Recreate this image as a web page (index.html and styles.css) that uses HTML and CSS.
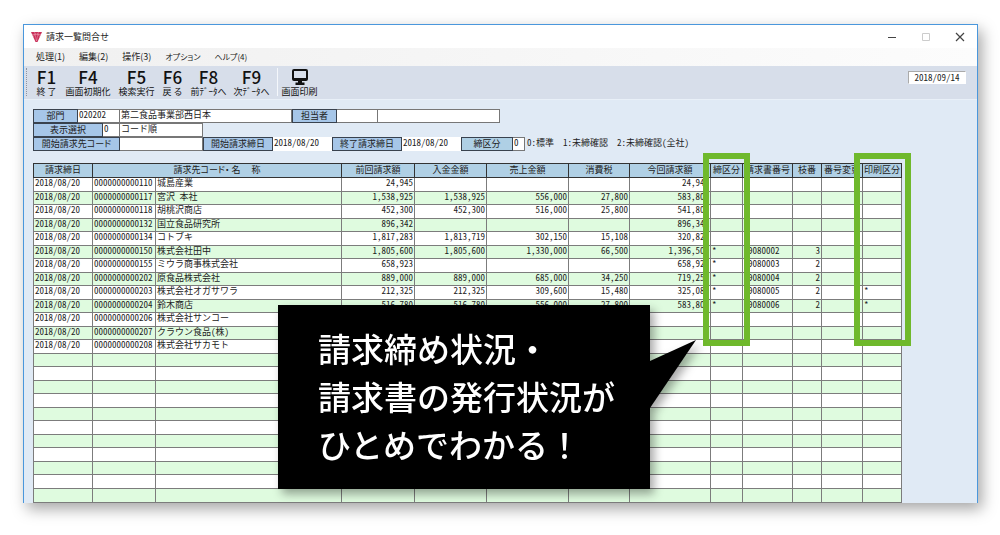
FILE: index.html
```html
<!DOCTYPE html>
<html lang="ja">
<head>
<meta charset="utf-8">
<meta name="viewport" content="width=device-width, initial-scale=1">
<title>請求一覧問合せ</title>
<link rel="stylesheet" href="styles.css">
</head>
<body>
<main class="window">
  <header class="titlebar">
    <svg class="logo" viewBox="0 0 11 10" aria-hidden="true"><path d="M0 0h11L6.500 10h-2z" fill="#c9305a"/><path d="M1 2.500h9M3.500 0l2 9M7.500 0l-2 9M2 5l3-4M9 5L6 1" stroke="#f3b6c6" stroke-width=".4" fill="none"/></svg>
    <h1 class="title">請求一覧問合せ</h1>
    <div class="controls">
      <button type="button" aria-label="最小化"><svg viewBox="0 0 10 10"><path d="M1 5.500h8" stroke="#444"/></svg></button>
      <button type="button" aria-label="最大化" disabled><svg viewBox="0 0 10 10"><path d="M1.500 1.500h7v7h-7z" stroke="#ccc" fill="none"/></svg></button>
      <button type="button" aria-label="閉じる"><svg viewBox="0 0 10 10"><path d="M1 1l8 8M9 1L1 9" stroke="#444" stroke-width="1.200"/></svg></button>
    </div>
  </header>
  <nav class="menu">
    <button type="button">処理(1)</button>
    <button type="button">編集(2)</button>
    <button type="button">操作(3)</button>
    <button type="button" class="kana">オプション</button>
    <button type="button" class="kana">ヘルプ(4)</button>
  </nav>
  <div class="toolbar">
    <span class="grip"></span>
    <button type="button" class="tool w-s"><b>F1</b><span>終 了</span></button>
    <button type="button" class="tool w-l"><b>F4</b><span>画面初期化</span></button>
    <button type="button" class="tool w-m"><b>F5</b><span>検索実行</span></button>
    <button type="button" class="tool w-s"><b>F6</b><span>戻 る</span></button>
    <button type="button" class="tool w-m"><b>F8</b><span>前ﾃﾞｰﾀへ</span></button>
    <button type="button" class="tool w-m"><b>F9</b><span>次ﾃﾞｰﾀへ</span></button>
    <span class="separator"></span>
    <button type="button" class="tool w-m"><svg class="monitor" viewBox="0 0 16 16" aria-hidden="true"><rect x="1" y="1" width="14" height="10" rx="1" fill="none" stroke="#111" stroke-width="2"/><path d="M1 9h14v2H1zM6 11h4v3H6zM3.500 13.500h9V16h-9z" fill="#111"/></svg><span>画面印刷</span></button>
    <time class="today">2018/09/14</time>
  </div>

  <section class="content">
    <form class="search">
      <div class="line">
        <label class="w45" for="dept">部門</label>
        <input class="w42" id="dept" value="020202">
        <input class="w172" aria-label="部門名" value="第二食品事業部西日本">
        <label class="w45" for="person">担当者</label>
        <input class="w41" id="person">
        <input class="w122" aria-label="担当者名">
      </div>
      <div class="line">
        <label class="w70" for="view">表示選択</label>
        <input class="w17" id="view" value="0">
        <input class="w83" aria-label="表示順" value="コード順">
      </div>
      <div class="line">
        <label class="w87" for="code">開始請求先コード</label>
        <input class="w83" id="code">
        <label class="w70" for="from">開始請求締日</label>
        <input class="w59 plain" id="from" value="2018/08/20">
        <label class="w70" for="to">終了請求締日</label>
        <input class="w59 plain" id="to" value="2018/08/20">
        <label class="w52 pale" for="kind">締区分</label>
        <input class="w12" id="kind" value="0">
        <span class="hint">0:標準&nbsp; 1:未締確認&nbsp; 2:未締確認(全社)</span>
      </div>
    </form>

    <table class="list">
      <colgroup><col class="c59"><col class="c63"><col><col class="c73"><col class="c72"><col class="c82"><col class="c61"><col class="c81"><col class="c32"><col class="c50"><col class="c29"><col class="c41"><col class="c39"></colgroup>
      <thead>
        <tr><th>請求締日<th colspan="2">請求先コード・ 名　 称<th>前回請求額<th>入金金額<th>売上金額<th>消費税<th>今回請求額<th>締区分<th>請求書番号<th>枝番<th>番号変更<th>印刷区分</tr>
      </thead>
      <tbody>
        <tr><td>2018/08/20<td>0000000000110<td>城島産業<td>24,945<td><td><td><td>24,945<td><td><td><td><td></tr>
        <tr><td>2018/08/20<td>0000000000117<td>宮沢 本社<td>1,538,925<td>1,538,925<td>556,000<td>27,800<td>583,800<td><td><td><td><td></tr>
        <tr><td>2018/08/20<td>0000000000118<td>胡桃沢商店<td>452,300<td>452,300<td>516,000<td>25,800<td>541,800<td><td><td><td><td></tr>
        <tr><td>2018/08/20<td>0000000000132<td>国立食品研究所<td>896,342<td><td><td><td>896,342<td><td><td><td><td></tr>
        <tr><td>2018/08/20<td>0000000000134<td>コトブキ<td>1,817,283<td>1,813,719<td>302,150<td>15,108<td>320,822<td><td><td><td><td></tr>
        <tr><td>2018/08/20<td>0000000000150<td>株式会社田中<td>1,805,600<td>1,805,600<td>1,330,000<td>66,500<td>1,396,500<td>*<td>9080002<td>3<td><td></tr>
        <tr><td>2018/08/20<td>0000000000155<td>ミウラ商事株式会社<td>658,923<td><td><td><td>658,923<td>*<td>9080003<td>2<td><td></tr>
        <tr><td>2018/08/20<td>0000000000202<td>原食品株式会社<td>889,000<td>889,000<td>685,000<td>34,250<td>719,250<td>*<td>9080004<td>2<td><td></tr>
        <tr><td>2018/08/20<td>0000000000203<td>株式会社オガサワラ<td>212,325<td>212,325<td>309,600<td>15,480<td>325,080<td>*<td>9080005<td>2<td><td>*</tr>
        <tr><td>2018/08/20<td>0000000000204<td>鈴木商店<td>516,780<td>516,780<td>556,000<td>27,800<td>583,800<td>*<td>9080006<td>2<td><td>*</tr>
        <tr><td>2018/08/20<td>0000000000206<td>株式会社サンコー<td><td><td><td><td><td><td><td><td><td></tr>
        <tr><td>2018/08/20<td>0000000000207<td>クラウン食品(株)<td><td><td><td><td><td><td><td><td><td></tr>
        <tr><td>2018/08/20<td>0000000000208<td>株式会社サカモト<td><td><td><td><td><td><td><td><td><td></tr>
        <tr><td><td><td><td><td><td><td><td><td><td><td><td><td></tr>
        <tr><td><td><td><td><td><td><td><td><td><td><td><td><td></tr>
        <tr><td><td><td><td><td><td><td><td><td><td><td><td><td></tr>
        <tr><td><td><td><td><td><td><td><td><td><td><td><td><td></tr>
        <tr><td><td><td><td><td><td><td><td><td><td><td><td><td></tr>
        <tr><td><td><td><td><td><td><td><td><td><td><td><td><td></tr>
        <tr><td><td><td><td><td><td><td><td><td><td><td><td><td></tr>
        <tr><td><td><td><td><td><td><td><td><td><td><td><td><td></tr>
        <tr><td><td><td><td><td><td><td><td><td><td><td><td><td></tr>
        <tr><td><td><td><td><td><td><td><td><td><td><td><td><td></tr>
        <tr><td><td><td><td><td><td><td><td><td><td><td><td><td></tr>
      </tbody>
    </table>
  </section>

  <div class="highlight closing"></div>
  <div class="highlight printing"></div>
  <aside class="callout">
    <svg class="tail" viewBox="0 0 46 68" aria-hidden="true"><path d="M0 21L46 0L0 68z"/></svg>
    <p>請求締め状況・<br>請求書の発行状況が<br>ひとめでわかる！</p>
  </aside>
</main>
</body>
</html>
```

FILE: styles.css
```css
* {
  box-sizing: border-box;
}

body {
  margin: 0;
  padding: 24px 22px 32px 23px;
  background: #fff;
  color: #222;
  font: 9px/12px "Noto Sans CJK JP", sans-serif;
}

button,
input {
  margin: 0;
  padding: 0;
  border: 0;
  background: none;
  color: inherit;
  font: inherit;
}

.window {
  position: relative;
  min-width: 955px;
  border: 1px solid #4a97dc;
  border-bottom: 0;
  background: #e0eaf5;
  box-shadow: 4px 6px 14px rgba(0, 0, 0, 0.35);
}

/* Title bar */
.titlebar {
  display: flex;
  align-items: center;
  height: 23px;
  padding: 0 12px 0 7px;
  background: #fff;
}

.logo {
  width: 11px;
  height: 10px;
}

.title {
  margin: 0 0 0 4px;
  font-size: 9px;
  font-weight: 400;
  line-height: 10px;
}

.controls {
  display: flex;
  gap: 24px;
  margin-left: auto;
}

.controls button {
  width: 10px;
  height: 10px;
}

.controls svg {
  display: block;
}

/* Menu */
.menu {
  display: flex;
  gap: 14px;
  align-items: center;
  height: 18px;
  padding-left: 12px;
  background: linear-gradient(90deg, #f0f0f0, #fcfcfc);
  font-feature-settings: "palt";
}

.menu .kana {
  font-size: 8px;
}

/* Toolbar */
.toolbar {
  display: flex;
  align-items: flex-start;
  height: 34px;
  padding: 2px 11px 0 2px;
  border-bottom: 1px solid #e9f0f8;
  background: #d7deea;
}

.grip {
  width: 2px;
  height: 28px;
  margin-right: 8px;
  border-left: 1px dotted #8d95a3;
}

.tool {
  display: flex;
  flex-direction: column;
  align-items: center;
  margin-right: 8px;
  color: #111;
  white-space: nowrap;
}

.tool b {
  font-size: 17px;
  font-weight: 500;
  line-height: 18px;
}

.tool span {
  line-height: 12px;
}

.w-s { width: 21px; }
.w-m { width: 35px; }
.w-l { width: 46px; }

.monitor {
  width: 16px;
  height: 16px;
  margin: 1px 0;
}

.separator {
  height: 28px;
  margin-right: 4px;
  border-left: 1px solid #f4f7fb;
}

.today {
  width: 58px;
  height: 13px;
  margin: 3px 0 0 auto;
  border: 1px solid #fff;
  border-top-color: #aaa;
  border-left-color: #aaa;
  background: #fff;
  font-feature-settings: "hwid";
  line-height: 11px;
  text-align: center;
}

/* Search conditions */
.content {
  padding: 9px 75px 0 9px;
}

.search {
  margin-bottom: 12px;
}

.line {
  display: flex;
  height: 14px;
}

.line label {
  height: 14px;
  border: 1px solid #39424e;
  background: #a6c6e8;
  font-feature-settings: "palt";
  line-height: 12px;
  text-align: center;
  white-space: nowrap;
}

.line .pale {
  background: #afd0e5;
}

.line input {
  height: 14px;
  padding: 0 0 3px 1px;
  border: solid #777;
  border-width: 1px 1px 1px 0;
  background: #fff;
  font-feature-settings: "hwid";
}

.line .plain {
  border-color: #fff;
}

.hint {
  padding-left: 2px;
  font-feature-settings: "hwid";
  line-height: 12px;
  white-space: nowrap;
}

.w12 { width: 12px; }
.w17 { width: 17px; }
.w41 { width: 41px; }
.w42 { width: 42px; }
.w45 { width: 45px; }
.w52 { width: 52px; }
.w59 { width: 59px; }
.w70 { width: 70px; }
.w83 { width: 83px; }
.w87 { width: 87px; }
.w122 { width: 122px; }
.w172 { width: 172px; }

/* Invoice list */
.list {
  width: 100%;
  border-collapse: collapse;
  table-layout: fixed;
  font-feature-settings: "hwid";
}

.c29 { width: 29px; }
.c32 { width: 32px; }
.c39 { width: 39px; }
.c41 { width: 41px; }
.c50 { width: 50px; }
.c59 { width: 59px; }
.c61 { width: 61px; }
.c63 { width: 63px; }
.c72 { width: 72px; }
.c73 { width: 73px; }
.c81 { width: 81px; }
.c82 { width: 82px; }

.list th,
.list td {
  padding: 0 1px;
  border: 1px solid #7c7c7c;
  line-height: 10px;
  white-space: nowrap;
  vertical-align: top;
}

.list th {
  height: 14px;
  padding: 0;
  border-color: #333;
  background: #b0d0e5;
  font-weight: 400;
  font-feature-settings: "palt";
  line-height: 12px;
}

.list td {
  height: 14px;
}

.list tbody tr {
  background: #fff;
}

.list tbody tr:nth-child(even) {
  background: #dffbdf;
}

.list tbody tr:nth-child(even) td {
  height: 13px;
}

.list tbody tr:last-child td {
  height: 14px;
}

.list td:nth-child(n+4):nth-child(-n+8),
.list td:nth-child(11) {
  text-align: right;
}

.list td:nth-child(10) {
  padding-left: 5px;
}

/* Annotations over the window */
.highlight {
  position: absolute;
  top: 128px;
  height: 193px;
  border: 6px solid #6fb92c;
}

.closing {
  right: 227px;
  width: 47px;
}

.printing {
  right: 66px;
  width: 57px;
}

.callout {
  position: absolute;
  top: 280px;
  right: 327px;
  width: 372px;
  padding: 19px 0 21px 40px;
  background: #000;
  color: #fff;
  filter: drop-shadow(4px 5px 5px rgba(0, 0, 0, 0.35));
  font-size: 33px;
  font-weight: 500;
  line-height: 48px;
  white-space: nowrap;
}

.callout p {
  margin: 0;
}

.tail {
  position: absolute;
  top: 35px;
  left: 100%;
  width: 46px;
  height: 68px;
}
```
